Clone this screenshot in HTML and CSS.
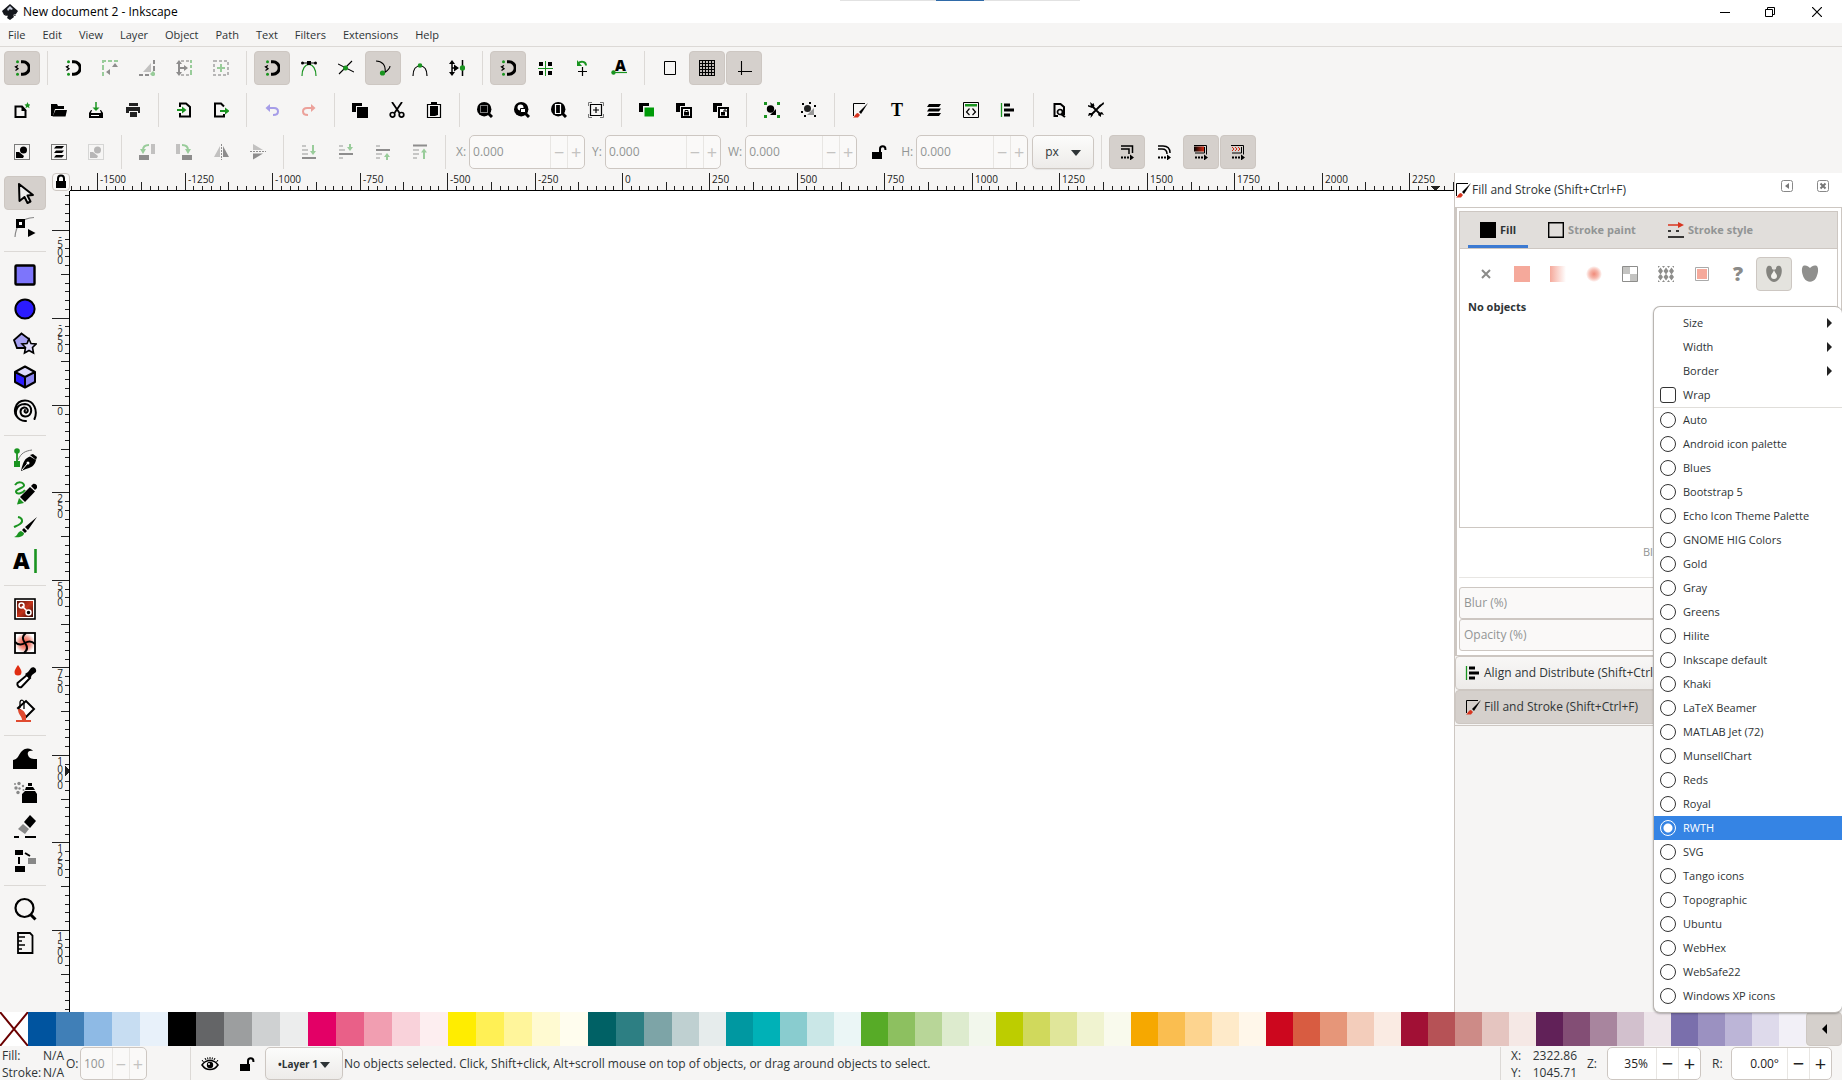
FILE: index.html
```html
<!DOCTYPE html>
<html lang="en">
<head>
<meta charset="utf-8">
<meta name="viewport" content="width=device-width, initial-scale=1">
<title>New document 2 - Inkscape</title>
<link rel="stylesheet" href="styles.css">
</head>
<body>
<svg class="sprite" aria-hidden="true">
  <defs>
    <linearGradient id="g-lin"><stop offset="0" stop-color="#f5a99b"/><stop offset="1" stop-color="#f5a99b" stop-opacity="0"/></linearGradient>
    <radialGradient id="g-rad"><stop offset="0" stop-color="#f08b7a"/><stop offset=".5" stop-color="#f6b5a9"/><stop offset="1" stop-color="#f5a99b" stop-opacity="0"/></radialGradient>
    <linearGradient id="g-red"><stop offset="0" stop-color="#000"/><stop offset="1" stop-color="#d42a12"/></linearGradient>
    <linearGradient id="g-tool" x1="0" y1="0" x2="1" y2="1"><stop offset="0" stop-color="#5a0f05"/><stop offset=".5" stop-color="#c4331b"/><stop offset="1" stop-color="#3a0904"/></linearGradient>
    <radialGradient id="g-mesh"><stop offset="0" stop-color="#e8402a"/><stop offset=".6" stop-color="#f39c8f"/><stop offset="1" stop-color="#fff"/></radialGradient>
  </defs>
  <symbol id="snap" viewBox="0 0 16 16"><path d="M7 1.800h2a6.200 6.200 0 0 1 0 12.400H7" fill="none" stroke="#000" stroke-width="3"/><path d="M4 5.500L1.500 6.800l2.500 2L1.500 10.500" fill="none" stroke="#000" stroke-width="1.300"/><circle cx="3.500" cy="1.800" r="1.500" fill="#1a9420"/><circle cx="3.500" cy="14.200" r="1.500" fill="#1a9420"/></symbol>
  <symbol id="bbox-edge" viewBox="0 0 16 16"><path d="M1 16v-4M1 10V5M1 3V1h3M6 1h4M12 1h4" fill="none" stroke="#1a9420" stroke-width="2"/><path d="M10 7l3-4 3 4zM8 9v6l-4-3z"/></symbol>
  <symbol id="bbox-corner" viewBox="0 0 16 16"><path d="M15 0v4M15 6v5M0 15h4M6 15h4" stroke="#000" stroke-width="2"/><path d="M12 3v9H4z" opacity=".5"/><path d="M14 11l3 3-3 3-3-3z" fill="#1a9420"/></symbol>
  <symbol id="bbox-mid" viewBox="0 0 16 16"><path d="M5 1h3M10 1h3M5 15h3M10 15h3" stroke="#000" stroke-width="2" opacity=".6"/><path d="M15 0v3M15 5v3M15 10v5" stroke="#1a9420" stroke-width="2"/><path d="M3 3v10M3 8h6" stroke="#000" stroke-width="2"/><path d="M0 4l3-4 3 4zM0 12l3 4 3-4zM8 5l4 3-4 3z"/></symbol>
  <symbol id="bbox-center" viewBox="0 0 16 16"><rect x="1" y="1" width="14" height="14" fill="none" stroke="#000" stroke-width="2" stroke-dasharray="3 2" opacity=".6"/><path d="M8 4v8M4 8h8" stroke="#1a9420" stroke-width="2"/></symbol>
  <symbol id="nodes" viewBox="0 0 16 16"><path d="M1 16C1 9 4 4.500 8 4.500S15 9 15 16" fill="none" stroke="#1a9420" stroke-width="1.200"/><path d="M1 3h14" stroke="#000"/><path d="M6 1h4v4H6z"/><circle cx="1.500" cy="3" r="1.500"/><circle cx="14.500" cy="3" r="1.500"/></symbol>
  <symbol id="cross-node" viewBox="0 0 16 16"><path d="M0 4l16 8M1 14L14 1" stroke="#000" stroke-width="1.100"/><circle cx="7.500" cy="8" r="2.500" fill="#1a9420"/></symbol>
  <symbol id="curve-node" viewBox="0 0 16 16"><path d="M1 1c6 0 10 4 9 11M15 6c0 3-3 5-6 7" fill="none" stroke="#000" stroke-width="1.100"/><circle cx="7.500" cy="13" r="2.600" fill="#1a9420"/></symbol>
  <symbol id="smooth-node" viewBox="0 0 16 16"><path d="M1 16C1 9 4 6 8 6s7 3 7 10" fill="none" stroke="#000" stroke-width="1.200"/><circle cx="8" cy="5.500" r="2.300" fill="#1a9420"/></symbol>
  <symbol id="mid-node" viewBox="0 0 16 16"><path d="M3 3v10M3 8h4M13.500 0v16" stroke="#000" stroke-width="1.500"/><path d="M0 4l3-4 3 4zM0 12l3 4 3-4zM5 4.500L10 8l-5 3.500z"/><circle cx="13.500" cy="8" r="2.700" fill="#1a9420"/></symbol>
  <symbol id="obj-mid" viewBox="0 0 16 16"><path d="M2 2h4v4H2zM11 2h4v4h-4zM2 11h4v4H2zM11 11h4v4h-4z"/><path d="M8.500 1v15M1 8.500h15" stroke="#1a9420"/></symbol>
  <symbol id="rot-center" viewBox="0 0 16 16"><path d="M8.500 7v9M4 11.500h9" stroke="#000" stroke-width="1.200"/><path d="M4 3.500c3-3 8-2 8 2" fill="none" stroke="#1a9420" stroke-width="2"/><path d="M3 0v6h5z" fill="#1a9420"/></symbol>
  <symbol id="page" viewBox="0 0 16 16"><path d="M2.500 1.500h11v13h-11z" fill="none" stroke="#000"/></symbol>
  <symbol id="grid" viewBox="0 0 16 16"><path d="M.5.5h15v15H.5zM3.500 0v16M6.500 0v16M9.500 0v16M12.500 0v16M0 3.500h16M0 6.500h16M0 9.500h16M0 12.500h16" fill="none" stroke="#000" stroke-width="1.200"/></symbol>
  <symbol id="guide" viewBox="0 0 16 16"><path d="M5.500 1v14M2 11.500h14" stroke="#000" stroke-width="1.100"/></symbol>
  <symbol id="new" viewBox="0 0 16 16"><path d="M1.500 4.500H8l3.500 4V15h-10z" fill="none" stroke="#000" stroke-width="2"/><path d="M7.500 4v5h5z"/><path d="M13.500 0l1 2.200 2 .3-1.500 1.500.5 2.200-2-1.200-2 1.200.5-2.200-1.500-1.500 2-.3z" fill="#1a9420"/></symbol>
  <symbol id="open" viewBox="0 0 16 16"><path d="M0 2h6l1 2h6v3H4l-2 7H0z"/><path d="M4.500 8H16l-1.500 6.500h-13z"/></symbol>
  <symbol id="save" viewBox="0 0 16 16"><path d="M8 0v7" stroke="#1a9420" stroke-width="1.500"/><path d="M4.500 5.500h7L8 9z" fill="#1a9420"/><path d="M3 8l-2 3v5h14v-5l-2-3h-1l1 3H3l1-3z"/><path d="M3 13.500h8" stroke="#fff"/></symbol>
  <symbol id="print" viewBox="0 0 16 16"><path d="M4 1h9v3H4zM1 5h14v6h-2V9H4v2H1zM5 10h7v5H5z" fill="#222"/></symbol>
  <symbol id="import" viewBox="0 0 16 16"><path d="M4 5V1.500h6L14 5v9.500H4V11" fill="none" stroke="#000" stroke-width="2"/><path d="M1 8h6" stroke="#1a9420" stroke-width="2"/><path d="M6 4.500L10.500 8 6 11.500z" fill="#1a9420"/></symbol>
  <symbol id="export" viewBox="0 0 16 16"><path d="M11 4.500L8 1.500H2v13h9V12" fill="none" stroke="#000" stroke-width="2"/><path d="M7 9h6" stroke="#1a9420" stroke-width="2"/><path d="M12 5.500L16.500 9 12 12.500z" fill="#1a9420"/></symbol>
  <symbol id="undo" viewBox="0 0 16 16"><path d="M4 6h6c3 0 4 2 4 3.500S13 13 9 13" fill="none" stroke="#3a25d8" stroke-width="2"/><path d="M6 2v8L1.500 6z" fill="#3a25d8"/></symbol>
  <symbol id="redo" viewBox="0 0 16 16"><path d="M12 6H6C3 6 2 8 2 9.500S3 13 7 13" fill="none" stroke="#e03020" stroke-width="2"/><path d="M10 2v8l4.500-4z" fill="#e03020"/></symbol>
  <symbol id="copy" viewBox="0 0 16 16"><path d="M0 1h10v3H4v6H0z"/><path d="M5 5h11v11H5z"/></symbol>
  <symbol id="cut" viewBox="0 0 16 16"><path d="M3 0l7.500 11M13 0L5.500 11" stroke="#000" stroke-width="1.800"/><circle cx="3.500" cy="12.800" r="2.300" fill="none" stroke="#000" stroke-width="1.700"/><circle cx="12.500" cy="12.800" r="2.300" fill="none" stroke="#000" stroke-width="1.700"/></symbol>
  <symbol id="paste" viewBox="0 0 16 16"><path d="M1.500 2.500h13v13h-13z" fill="none" stroke="#000" stroke-width="1.200"/><path d="M5 0h6v3H5z"/><path d="M4 4h8v9l-3 1H4z"/></symbol>
  <symbol id="zoom-sel" viewBox="0 0 16 16"><circle cx="7.200" cy="7.200" r="7.200"/><path d="M11 11l4 4" stroke="#000" stroke-width="3"/><path d="M3.500 3.500h7v7h-7z" fill="none" stroke="#fff" stroke-dasharray="1 1"/></symbol>
  <symbol id="zoom-draw" viewBox="0 0 16 16"><circle cx="7.200" cy="7.200" r="7.200"/><path d="M11 11l4 4" stroke="#000" stroke-width="3"/><circle cx="6.500" cy="5.500" r="3" fill="#fff"/><path d="M6.500 6.500h5v4h-5z" fill="#fff" stroke="#000"/></symbol>
  <symbol id="zoom-page" viewBox="0 0 16 16"><circle cx="7.200" cy="7.200" r="7.200"/><path d="M11 11l4 4" stroke="#000" stroke-width="3"/><path d="M4.500 2.500h5v9h-5z" fill="none" stroke="#fff" stroke-width="1.200"/></symbol>
  <symbol id="zoom-center" viewBox="0 0 16 16"><path d="M.5 4V.5H4M12 .5h3.500V4M15.500 12v3.500H12M4 15.500H.5V12" fill="none" stroke="#777"/><path d="M2.500 2.500h11v11h-11zM8 5v6M5 8h6" fill="none" stroke="#000" stroke-width="1.200"/></symbol>
  <symbol id="duplicate" viewBox="0 0 16 16"><path d="M0 1h10v3H4v6H0z"/><path d="M5.500 5.500H15v9H5.500z" fill="#009b09"/></symbol>
  <symbol id="clone" viewBox="0 0 16 16"><path d="M0 1h9v3H4v6H0z"/><path d="M6 6h9v9H6z" fill="#fff" stroke="#000" stroke-width="2"/><path d="M8 10h5v3.500H8z"/><path d="M9 10V8.500h3V10" fill="none" stroke="#000"/></symbol>
  <symbol id="unclone" viewBox="0 0 16 16"><path d="M0 1h9v3H4v6H0z"/><path d="M6 6h9v9H6z" fill="#fff" stroke="#000" stroke-width="2"/><path d="M8 10h4v3.500H8z"/><path d="M11 10V8h2v2" fill="none" stroke="#000"/></symbol>
  <symbol id="group" viewBox="0 0 16 16"><path d="M0 0h3v3H0zM13 0h3v3h-3zM0 13h3v3H0zM13 13h3v3h-3z" fill="#1a9420"/><circle cx="6.500" cy="7" r="3.700"/><path d="M12 7v6H6z"/></symbol>
  <symbol id="ungroup" viewBox="0 0 16 16"><circle cx="6.500" cy="6.500" r="3.500" fill="#222"/><path d="M13 6v7H6z" fill="#999"/><path d="M1 1h2v2H1zM8 0h2v2H8zM13 3h2v2h-2zM0 9h2v2H0zM3 13h2v2H3zM13 13h2v2h-2z"/></symbol>
  <symbol id="fillstroke" viewBox="0 0 16 16"><path d="M1.500 14V1.500H13" fill="none" stroke="#000"/><path d="M16 1L9 12l-2-2z"/><path d="M6 11l2 2-2 2.500H1c2-1 2-4 5-4.500z" fill="#d8351f"/></symbol>
  <symbol id="layers" viewBox="0 0 16 16"><path d="M3 2h12l-2 3H1zM3 6.500h12l-2 3H1zM3 11h12l-2 3H1z"/></symbol>
  <symbol id="xml" viewBox="0 0 16 16"><path d="M.5.5h15v15H.5z" fill="none" stroke="#000"/><path d="M2 2h12v2.500H2z" fill="#1a9420"/><path d="M6.500 6.500l-3 3.500 3 3M9.500 6.500l3 3.500-3 3" fill="none" stroke="#000" stroke-width="1.200"/></symbol>
  <symbol id="align" viewBox="0 0 16 16"><path d="M1.500 1v14" stroke="#1a9420" stroke-width="1.300"/><path d="M4 1.500h6v3H4zM4 6.500h10v3H4zM4 11.500h6v3H4z"/></symbol>
  <symbol id="doc-props" viewBox="0 0 16 16"><path d="M7 14H3.500V2h6L13 5v8" fill="none" stroke="#000" stroke-width="2"/><circle cx="9" cy="10" r="2.500" fill="#f6f5f4" stroke="#000" stroke-width="1.700"/><path d="M10 12l4 3" stroke="#000" stroke-width="2"/></symbol>
  <symbol id="prefs" viewBox="0 0 16 16"><path d="M3 3l10 10M13 3L3 13" stroke="#000" stroke-width="1.800"/><path d="M2 0l2.500 2L5.500 1l1 3L4 6 0 4.500V3l3 1zM11 11l3-1 2 3-3-1v3l-3-2zM15.500 0L16 2l-4 3-1-1zM1 11l3 0 1 2-2.500 3L3 13 0 14z"/></symbol>
  <symbol id="sel-all" viewBox="0 0 16 16"><path d="M.5.5h15v15H.5z" fill="none" stroke="#000" stroke-dasharray="1 1"/><circle cx="9.500" cy="6" r="3.500"/><path d="M2 8h3l5 4-1 2H2z"/></symbol>
  <symbol id="sel-layers" viewBox="0 0 16 16"><path d="M.5.5h15v15H.5z" fill="none" stroke="#000" stroke-dasharray="1 1"/><path d="M5 2h8l-2 2.500H3zM5 6.500h8L11 9H3zM5 11h8l-2 2.500H3z"/></symbol>
  <symbol id="rot-left" viewBox="0 0 16 16"><path d="M12 0h4v10h-4z" opacity=".5"/><path d="M0 11h10v5H0z"/><path d="M10 1C6 1 4 3 4 6" fill="none" stroke="#1a9420" stroke-width="2"/><path d="M1 5h6l-3 5z" fill="#1a9420"/></symbol>
  <symbol id="rot-right" viewBox="0 0 16 16"><path d="M0 0h4v10H0z" opacity=".5"/><path d="M6 11h10v5H6z"/><path d="M6 1c4 0 6 2 6 5" fill="none" stroke="#1a9420" stroke-width="2"/><path d="M9 5h6l-3 5z" fill="#1a9420"/></symbol>
  <symbol id="flip-h" viewBox="0 0 16 16"><path d="M7 2v11H1z" opacity=".5"/><path d="M10 2v11h6z"/><path d="M8.500 0v16" stroke="#000" stroke-dasharray="2 1"/></symbol>
  <symbol id="flip-v" viewBox="0 0 16 16"><path d="M3 6V0l10 6z" opacity=".5"/><path d="M3 9.500v6l10-6z"/><path d="M0 7.500h16" stroke="#000" stroke-dasharray="2 1"/></symbol>
  <symbol id="lower-bottom" viewBox="0 0 16 16"><path d="M1 2h4M1 6h6M1 10h6" stroke="#000" stroke-width="1.500" opacity=".6"/><path d="M1 14h14" stroke="#000" stroke-width="2"/><path d="M12 1v7" stroke="#1a9420" stroke-width="2"/><path d="M9 7h6l-3 4z" fill="#1a9420"/></symbol>
  <symbol id="lower" viewBox="0 0 16 16"><path d="M1 2h4M1 6h6M1 14h4" stroke="#000" stroke-width="1.500" opacity=".6"/><path d="M1 10h14" stroke="#000" stroke-width="2"/><path d="M12 0v4" stroke="#1a9420" stroke-width="2"/><path d="M9 3h6l-3 4z" fill="#1a9420"/></symbol>
  <symbol id="raise" viewBox="0 0 16 16"><path d="M1 2h4M1 10h6M1 14h4" stroke="#000" stroke-width="1.500" opacity=".6"/><path d="M1 6h14" stroke="#000" stroke-width="2"/><path d="M12 16v-4" stroke="#1a9420" stroke-width="2"/><path d="M9 13h6l-3-4z" fill="#1a9420"/></symbol>
  <symbol id="raise-top" viewBox="0 0 16 16"><path d="M1 6h6M1 10h6M1 14h4" stroke="#000" stroke-width="1.500" opacity=".6"/><path d="M1 1.500h14" stroke="#000" stroke-width="2"/><path d="M12 15V8" stroke="#1a9420" stroke-width="2"/><path d="M9 8.500h6l-3-4z" fill="#1a9420"/></symbol>
  <symbol id="unlock" viewBox="0 0 16 16"><path d="M1 8h10v7H1z"/><path d="M9 8V5a2.700 2.700 0 0 1 5.400 0v1" fill="none" stroke="#000" stroke-width="2"/></symbol>
  <symbol id="scale-stroke" viewBox="0 0 16 16"><path d="M2 2h11.500v7M2 5h8v5" fill="none" stroke="#000" stroke-width="1.500"/><path d="M2 13.500h9" stroke="#000" stroke-width="2" stroke-dasharray="2 1"/><path d="M11 10.500l4 3-4 3z"/></symbol>
  <symbol id="scale-corner" viewBox="0 0 16 16"><path d="M2 2h5c5 0 7 3 7 7M2 5h4c4 0 5 2 5 5" fill="none" stroke="#000" stroke-width="1.500"/><path d="M2 13.500h9" stroke="#000" stroke-width="2" stroke-dasharray="2 1"/><path d="M11 10.500l4 3-4 3z"/></symbol>
  <symbol id="move-grad" viewBox="0 0 16 16"><path d="M1 2.500h10v5H1z" fill="url(#g-red)"/><path d="M1 1.500h12.500v9M11.500 3v6H2" fill="none" stroke="#000"/><path d="M2 13.500h9" stroke="#000" stroke-width="2" stroke-dasharray="2 1"/><path d="M11 10.500l4 3-4 3z"/></symbol>
  <symbol id="move-pat" viewBox="0 0 16 16"><path d="M2 3l2 2-2 2M5 3l2 2-2 2M8 3l2 2-2 2" fill="none" stroke="#d42a12"/><path d="M1 1.500h12.500v9M11.500 3v6H2" fill="none" stroke="#000"/><path d="M2 13.500h9" stroke="#000" stroke-width="2" stroke-dasharray="2 1"/><path d="M11 10.500l4 3-4 3z"/></symbol>
  <symbol id="lock" viewBox="0 0 16 16"><path d="M3 7h10v7H3z"/><path d="M5 7V4.500a3 3 0 0 1 6 0V7" fill="none" stroke="#000" stroke-width="2"/></symbol>

  <symbol id="t-select" viewBox="0 0 24 24"><path d="M6 3l14 11-5.500.5 3 6-3 1.500-3-6L6.500 20z" fill="#eee" stroke="#000" stroke-width="2" stroke-linejoin="round"/></symbol>
  <symbol id="t-node" viewBox="0 0 24 24"><path d="M2 22C3 9 9 3 21 2.500" fill="none" stroke="#888" stroke-width="1.200"/><path d="M4.500 5.500h6v6h-6z" fill="#fff" stroke="#000" stroke-width="3"/><path d="M15 14l7.500 4-7.500 4z"/></symbol>
  <symbol id="t-rect" viewBox="0 0 24 24"><rect x="2.500" y="2.500" width="19" height="19" rx="1" fill="#7d75fb" stroke="#000" stroke-width="2.400"/></symbol>
  <symbol id="t-circle" viewBox="0 0 24 24"><circle cx="12" cy="12" r="9.600" fill="#2b1bff" stroke="#000" stroke-width="2"/></symbol>
  <symbol id="t-star" viewBox="0 0 24 24"><path d="M8.500 2.500l7.500 5.500-2.500 9H4L1 9z" fill="#a49ff0" stroke="#000" stroke-width="1.800"/><path d="M16 8l2 4.500 5 .5-3.500 3.500L20.500 22 16 19.500 11.500 22l1-5.500L9 13l5-.5z" fill="#dcd9fb" stroke="#000" stroke-width="1.600"/></symbol>
  <symbol id="t-cube" viewBox="0 0 24 24"><path d="M12 1.500L22 7l-10 5L2 7z" fill="#dcd9fb"/><path d="M2 7l10 5v10.500L2 17z" fill="#2b1bff"/><path d="M22 7l-10 5v10.500L22 17z" fill="#8d87f3"/><path d="M12 1.500L22 7v10l-10 5.500L2 17V7zM2 7l10 5 10-5M12 12v10" fill="none" stroke="#000" stroke-width="2" stroke-linejoin="round"/></symbol>
  <symbol id="t-spiral" viewBox="0 0 24 24"><path d="M12 11c-1 1.500 0 3 1.500 2.500C16 12.500 14.500 8 11 8.500 6 9.500 6.500 17 12 17.500 20 18 20.500 5.500 12 5 2.500 5 0 16 7 20.500c2 1.300 4 1.700 6 1.500M12 5M7 20.500C-2 14.500 2 1.500 12 1.500c9 0 13 10 9.500 18.500" fill="none" stroke="#000" stroke-width="2" stroke-linecap="round"/></symbol>
  <symbol id="t-pen" viewBox="0 0 24 24"><path d="M4 5v10" stroke="#1a9420" stroke-width="1.800"/><circle cx="4" cy="4" r="2.800" fill="#1a9420"/><path d="M1 14h6v6H1z" fill="#1a9420"/><path d="M5 13C8 6 12 4 19 3" fill="none" stroke="#777"/><path d="M8 24c2-9 4-13 9-14.500l6 3.500c-1 6-6 8-10 9z"/><path d="M9 23l5-6" stroke="#fff"/><circle cx="15" cy="16" r="1.500" fill="#fff"/><path d="M17 8l3-1 4 3-1 3z"/></symbol>
  <symbol id="t-pencil" viewBox="0 0 24 24"><path d="M2 4c3-4 8-3 9 0s-9 4-8 7 7 1 9-2" fill="none" stroke="#1a9420" stroke-width="2"/><path d="M7 16L17 6l5 4.500L12 21z"/><path d="M18 5l2-2c2-1 5 1 4 4l-2 2z"/><path d="M6 17l5 5-7 1.500z" fill="#1a9420"/></symbol>
  <symbol id="t-brush" viewBox="0 0 24 24"><path d="M5 2c5 1 5 5 2 7s-4 2-6 3" fill="none" stroke="#1a9420" stroke-width="2"/><path d="M24 2L15 15l-3-3zM11 13l3 3-2 2-3-3z"/><path d="M8 16l3 2c0 3-4 5-10 4 4-1 3-5 7-6z" fill="#1a9420"/></symbol>
  <symbol id="t-grad" viewBox="0 0 24 24"><rect x="2" y="2" width="20" height="20" fill="#fff" stroke="#000" stroke-width="1.600"/><rect x="4" y="4" width="16" height="16" fill="url(#g-tool)"/><path d="M9 9l6 6" stroke="#fff" stroke-width="1.500"/><circle cx="8.500" cy="8.500" r="2.500" fill="none" stroke="#fff" stroke-width="1.500"/><circle cx="15.500" cy="15.500" r="2.500" stroke="#fff" stroke-width="1.500"/></symbol>
  <symbol id="t-mesh" viewBox="0 0 24 24"><rect x="2" y="2" width="20" height="20" fill="url(#g-mesh)" stroke="#000" stroke-width="1.800"/><path d="M2 11c4 4 7 3 10 1s6-3 10 1M13 2c-4 3-4 6-1 10s3 7-1 10" fill="none" stroke="#000" stroke-width="2"/></symbol>
  <symbol id="t-dropper" viewBox="0 0 24 24"><path d="M5 0c2 3 3.500 5 3.500 7a3.500 3.500 0 0 1-7 0C1.500 5 3 3 5 0z" fill="#e02d12"/><path d="M14 10l3 3-8.500 9c-2 1-5-1-4-4z" fill="#fff" stroke="#000" stroke-width="2"/><path d="M12 9l3-2 3-4c3-2 6 1 5 4l-4 3-2 4z"/></symbol>
  <symbol id="t-bucket" viewBox="0 0 24 24"><path d="M5 9l8-7 8 8-8 8z" fill="#fff" stroke="#000" stroke-width="2"/><path d="M7 9V3c1-3 4-2 4 1v6" fill="none" stroke="#000" stroke-width="1.300"/><path d="M5 10c5 0 7 3 8 7v4h5v2H3v-2h6c0-4-4-5-4-11z" fill="#e04a30"/></symbol>
  <symbol id="t-tweak" viewBox="0 0 24 24"><path d="M0 13c5-1 5-4 8-8 4-5 10-4 12-1-4-1-6 1-5 4 1 4 5 4 9 4v10H0z"/></symbol>
  <symbol id="t-spray" viewBox="0 0 24 24"><path d="M9 13l3-3h10l2 3v9H9zM13 6h7l2 3H12zM15 2h4v3h-4z"/><g fill="#888"><circle cx="3" cy="7" r="1.700"/><circle cx="6" cy="2.500" r="1.700"/><circle cx="10" cy="5" r="1.200"/><circle cx="6.500" cy="7.500" r="1.200"/><circle cx="5" cy="11.500" r="1.700"/><circle cx="10.500" cy="9" r="1"/><circle cx="2" cy="3" r="1"/></g></symbol>
  <symbol id="t-eraser" viewBox="0 0 24 24"><path d="M17 0l6 6-6 7-6-6z"/><path d="M10 9l6 5-4 5-7-5z" fill="#888"/><path d="M1 22h5M12 22h11" stroke="#000" stroke-width="2"/></symbol>
  <symbol id="t-connect" viewBox="0 0 24 24"><path d="M2 1h8v5H2zM2 17h10v6H2z"/><path d="M15 9h8v6h-8z" fill="#888"/><path d="M6 8v7M12 4l5 3" stroke="#000" stroke-width="2"/></symbol>
  <symbol id="t-zoom" viewBox="0 0 24 24"><circle cx="11.500" cy="11" r="9" fill="none" stroke="#000" stroke-width="2.200"/><path d="M17.500 17.500l5 5" stroke="#000" stroke-width="3"/></symbol>
  <symbol id="t-measure" viewBox="0 0 24 24"><path d="M5 2h12l2.500 2.500V22H5z" fill="none" stroke="#000" stroke-width="1.800"/><path d="M5 6h7M5 10h4M5 14h7M5 18h4" stroke="#000" stroke-width="1.500"/></symbol>
</svg>

<header class="titlebar">
  <svg class="app-logo" viewBox="0 0 16 16"><path d="M8 0l8 7-2 3-3 1 1 2-4 3-3-2 1-2-4-1-2-4z" fill="#15171c"/><path d="M8 2l3 3-2 1-1-1-2 2-1-2z" fill="#c9cfdd"/><path d="M3 11l3 1M11 12l3-1" stroke="#555"/></svg>
  <h1 class="title">New document 2 - Inkscape</h1>
  <div class="progress"><span></span></div>
  <div class="window-buttons">
    <button aria-label="Minimize"><svg width="10" height="10"><path d="M0 5.500h10" stroke="#000"/></svg></button>
    <button aria-label="Restore"><svg width="10" height="10"><path d="M.5 2.500h7v7h-7zM2.500 2.500v-2h7v7h-2" fill="none" stroke="#000"/></svg></button>
    <button aria-label="Close"><svg width="10" height="10"><path d="M0 0l10 10M10 0L0 10" stroke="#000" stroke-width="1.200"/></svg></button>
  </div>
</header>

<nav class="menubar">
  <button>File</button><button>Edit</button><button>View</button><button>Layer</button><button>Object</button><button>Path</button><button>Text</button><button>Filters</button><button>Extensions</button><button>Help</button>
</nav>

<div class="toolbar" role="toolbar" aria-label="Snap controls">
  <button class="on" aria-label="Snapping"><svg><use href="#snap"/></svg></button>
  <i class="sep"></i>
  <button aria-label="Snap bounding boxes"><svg><use href="#snap"/></svg></button>
  <button disabled aria-label="Snap edges"><svg><use href="#bbox-edge"/></svg></button>
  <button disabled aria-label="Snap corners"><svg><use href="#bbox-corner"/></svg></button>
  <button disabled aria-label="Snap edge midpoints"><svg><use href="#bbox-mid"/></svg></button>
  <button disabled aria-label="Snap centers"><svg><use href="#bbox-center"/></svg></button>
  <i class="sep"></i>
  <button class="on" aria-label="Snap nodes"><svg><use href="#snap"/></svg></button>
  <button aria-label="Snap to paths"><svg><use href="#nodes"/></svg></button>
  <button aria-label="Snap to intersections"><svg><use href="#cross-node"/></svg></button>
  <button class="on" aria-label="Snap cusp nodes"><svg><use href="#curve-node"/></svg></button>
  <button aria-label="Snap smooth nodes"><svg><use href="#smooth-node"/></svg></button>
  <button aria-label="Snap midpoints"><svg><use href="#mid-node"/></svg></button>
  <i class="sep"></i>
  <button class="on" aria-label="Snap others"><svg><use href="#snap"/></svg></button>
  <button aria-label="Snap object centers"><svg><use href="#obj-mid"/></svg></button>
  <button aria-label="Snap rotation centers"><svg><use href="#rot-center"/></svg></button>
  <button aria-label="Snap text baselines"><svg viewBox="0 0 16 16"><text class="glyph-sans" x="4" y="11" font-size="15">A</text><path d="M1 12.500h15" stroke="#1a9420" stroke-width="1.200"/><circle cx="2.500" cy="12.500" r="2.200" fill="#1a9420"/></svg></button>
  <i class="sep"></i>
  <button aria-label="Snap page border"><svg><use href="#page"/></svg></button>
  <button class="on" aria-label="Snap grids"><svg><use href="#grid"/></svg></button>
  <button class="on" aria-label="Snap guides"><svg><use href="#guide"/></svg></button>
</div>

<div class="toolbar" role="toolbar" aria-label="Commands">
  <button aria-label="New"><svg><use href="#new"/></svg></button>
  <button aria-label="Open"><svg><use href="#open"/></svg></button>
  <button aria-label="Save"><svg><use href="#save"/></svg></button>
  <button aria-label="Print"><svg><use href="#print"/></svg></button>
  <i class="sep"></i>
  <button aria-label="Import"><svg><use href="#import"/></svg></button>
  <button aria-label="Export"><svg><use href="#export"/></svg></button>
  <i class="sep"></i>
  <button disabled aria-label="Undo"><svg><use href="#undo"/></svg></button>
  <button disabled aria-label="Redo"><svg><use href="#redo"/></svg></button>
  <i class="sep"></i>
  <button aria-label="Copy"><svg><use href="#copy"/></svg></button>
  <button aria-label="Cut"><svg><use href="#cut"/></svg></button>
  <button aria-label="Paste"><svg><use href="#paste"/></svg></button>
  <i class="sep"></i>
  <button aria-label="Zoom selection"><svg><use href="#zoom-sel"/></svg></button>
  <button aria-label="Zoom drawing"><svg><use href="#zoom-draw"/></svg></button>
  <button aria-label="Zoom page"><svg><use href="#zoom-page"/></svg></button>
  <button aria-label="Center page"><svg><use href="#zoom-center"/></svg></button>
  <i class="sep"></i>
  <button aria-label="Duplicate"><svg><use href="#duplicate"/></svg></button>
  <button aria-label="Clone"><svg><use href="#clone"/></svg></button>
  <button aria-label="Unlink clone"><svg><use href="#unclone"/></svg></button>
  <i class="sep"></i>
  <button aria-label="Group"><svg><use href="#group"/></svg></button>
  <button aria-label="Ungroup"><svg><use href="#ungroup"/></svg></button>
  <i class="sep"></i>
  <button aria-label="Fill and Stroke"><svg><use href="#fillstroke"/></svg></button>
  <button class="glyph-serif" aria-label="Text and Font">T</button>
  <button aria-label="Layers"><svg><use href="#layers"/></svg></button>
  <button aria-label="XML editor"><svg><use href="#xml"/></svg></button>
  <button aria-label="Align and Distribute"><svg><use href="#align"/></svg></button>
  <i class="sep"></i>
  <button aria-label="Document properties"><svg><use href="#doc-props"/></svg></button>
  <button aria-label="Preferences"><svg><use href="#prefs"/></svg></button>
</div>

<div class="toolbar" role="toolbar" aria-label="Selection controls">
  <button aria-label="Select all"><svg><use href="#sel-all"/></svg></button>
  <button aria-label="Select all in all layers"><svg><use href="#sel-layers"/></svg></button>
  <button disabled class="faint" aria-label="Deselect"><svg><use href="#sel-all"/></svg></button>
  <i class="sep"></i>
  <button disabled aria-label="Rotate left"><svg><use href="#rot-left"/></svg></button>
  <button disabled aria-label="Rotate right"><svg><use href="#rot-right"/></svg></button>
  <button disabled aria-label="Flip horizontal"><svg><use href="#flip-h"/></svg></button>
  <button disabled aria-label="Flip vertical"><svg><use href="#flip-v"/></svg></button>
  <i class="sep"></i>
  <button disabled aria-label="Lower to bottom"><svg><use href="#lower-bottom"/></svg></button>
  <button disabled aria-label="Lower"><svg><use href="#lower"/></svg></button>
  <button disabled aria-label="Raise"><svg><use href="#raise"/></svg></button>
  <button disabled aria-label="Raise to top"><svg><use href="#raise-top"/></svg></button>
  <i class="sep"></i>
  <label class="coord" for="fx">X:</label>
  <div class="spin off"><input id="fx" value="0.000" disabled><button disabled aria-label="Decrease X">−</button><button disabled aria-label="Increase X">+</button></div>
  <label class="coord" for="fy">Y:</label>
  <div class="spin off"><input id="fy" value="0.000" disabled><button disabled aria-label="Decrease Y">−</button><button disabled aria-label="Increase Y">+</button></div>
  <label class="coord" for="fw">W:</label>
  <div class="spin off narrow"><input id="fw" value="0.000" disabled><button disabled aria-label="Decrease width">−</button><button disabled aria-label="Increase width">+</button></div>
  <button class="ratio" aria-label="Lock ratio"><svg><use href="#unlock"/></svg></button>
  <label class="coord" for="fh">H:</label>
  <div class="spin off narrow"><input id="fh" value="0.000" disabled><button disabled aria-label="Decrease height">−</button><button disabled aria-label="Increase height">+</button></div>
  <div class="select unit"><select aria-label="Unit"><option>px</option></select></div>
  <i class="sep"></i>
  <button class="on" aria-label="Scale stroke width"><svg><use href="#scale-stroke"/></svg></button>
  <button aria-label="Scale corners"><svg><use href="#scale-corner"/></svg></button>
  <button class="on" aria-label="Move gradients"><svg><use href="#move-grad"/></svg></button>
  <button class="on" aria-label="Move patterns"><svg><use href="#move-pat"/></svg></button>
</div>

<main class="workspace">
  <div class="toolbox" role="toolbar" aria-label="Tools">
    <button class="on" aria-label="Select"><svg><use href="#t-select"/></svg></button>
    <button aria-label="Node"><svg><use href="#t-node"/></svg></button>
    <i class="rule"></i>
    <button aria-label="Rectangle"><svg><use href="#t-rect"/></svg></button>
    <button aria-label="Ellipse"><svg><use href="#t-circle"/></svg></button>
    <button aria-label="Star"><svg><use href="#t-star"/></svg></button>
    <button aria-label="3D box"><svg><use href="#t-cube"/></svg></button>
    <button aria-label="Spiral"><svg><use href="#t-spiral"/></svg></button>
    <i class="rule"></i>
    <button aria-label="Pen"><svg><use href="#t-pen"/></svg></button>
    <button aria-label="Pencil"><svg><use href="#t-pencil"/></svg></button>
    <button aria-label="Calligraphy"><svg><use href="#t-brush"/></svg></button>
    <button aria-label="Text"><svg viewBox="0 0 24 24"><text class="glyph-sans" x="0" y="20" font-size="23">A</text><path d="M22.500 0v24" stroke="#1a9420" stroke-width="2.600"/></svg></button>
    <i class="rule"></i>
    <button aria-label="Gradient"><svg><use href="#t-grad"/></svg></button>
    <button aria-label="Mesh"><svg><use href="#t-mesh"/></svg></button>
    <button aria-label="Dropper"><svg><use href="#t-dropper"/></svg></button>
    <button aria-label="Paint bucket"><svg><use href="#t-bucket"/></svg></button>
    <i class="rule"></i>
    <button aria-label="Tweak"><svg><use href="#t-tweak"/></svg></button>
    <button aria-label="Spray"><svg><use href="#t-spray"/></svg></button>
    <button aria-label="Eraser"><svg><use href="#t-eraser"/></svg></button>
    <button aria-label="Connector"><svg><use href="#t-connect"/></svg></button>
    <i class="rule"></i>
    <button aria-label="Zoom"><svg><use href="#t-zoom"/></svg></button>
    <button aria-label="Measure"><svg><use href="#t-measure"/></svg></button>
  </div>

  <div class="editor">
    <button class="guide-lock" aria-label="Lock guides"><svg><use href="#lock"/></svg></button>
    <svg class="ruler ruler-h" id="ruler-h"></svg>
    <svg class="ruler ruler-v" id="ruler-v"></svg>
    <div class="canvas"></div>
  </div>

  <aside class="dock">
    <div class="dock-head">
      <svg class="icon"><use href="#fillstroke"/></svg>
      <h2>Fill and Stroke (Shift+Ctrl+F)</h2>
      <button aria-label="Iconify"><svg width="12" height="12"><rect x=".5" y=".5" width="11" height="11" rx="2" fill="none" stroke="#888"/><path d="M8 3v6L4 6z" fill="#777"/></svg></button>
      <button aria-label="Close dialog"><svg width="12" height="12"><rect x=".5" y=".5" width="11" height="11" rx="2" fill="none" stroke="#888"/><path d="M3.500 3.500l5 5M8.500 3.500l-5 5" stroke="#777" stroke-width="2"/></svg></button>
    </div>
    <div class="panel">
      <section class="notebook">
        <div class="tabs" role="tablist">
          <button role="tab" class="tab current"><svg class="icon"><path d="M0 0h16v16H0z"/></svg>Fill</button>
          <button role="tab" class="tab"><svg class="icon"><path d="M.7.7h14.600v14.600H.7z" fill="none" stroke="#000" stroke-width="1.400"/></svg>Stroke paint</button>
          <button role="tab" class="tab"><svg class="icon"><path d="M0 3h11" stroke="#d8351f" stroke-width="1.500"/><path d="M10 0l6 3-6 3z" fill="#d8351f"/><path d="M0 9h3M8 9h3M0 15h16" stroke="#000" stroke-width="1.500"/></svg>Stroke style</button>
        </div>
        <div class="paints">
          <button aria-label="No paint"><svg><path d="M4 4l8 8M12 4l-8 8" stroke="#8b8b89" stroke-width="2"/></svg></button>
          <button aria-label="Flat color"><svg><path d="M0 0h16v16H0z" fill="#f5a99b"/></svg></button>
          <button aria-label="Linear gradient"><svg><path d="M0 0h16v16H0z" fill="url(#g-lin)"/></svg></button>
          <button aria-label="Radial gradient"><svg><circle cx="8" cy="8" r="8" fill="url(#g-rad)"/></svg></button>
          <button aria-label="Mesh gradient"><svg><path d="M.5.5h15v15H.5z" fill="#fff" stroke="#8d8d8b"/><path d="M1 1h7v7H1zM8 8h7v7H8z" fill="#c4c4c2"/></svg></button>
          <button aria-label="Pattern"><svg fill="#8d8d8b"><path d="M2.500 1.500L5 5 2.500 8.500 0 5zM8 1.500L10.500 5 8 8.500 5.500 5zM13.500 1.500L16 5l-2.500 3.500L11 5zM2.500 7.500L5 11l-2.500 3.500L0 11zM8 7.500l2.500 3.500L8 14.500 5.500 11zM13.500 7.500L16 11l-2.500 3.500L11 11zM0 0h2l-2 2zM4 0h3L5.500 2zM9 0h3l-1.500 2zM14 0h2v2zM0 14l2 2H0zM5.500 14L7 16H4zM10.500 14l1.500 2H9zM16 14v2h-2z"/></svg></button>
          <button aria-label="Swatch"><svg><path d="M1.500 1.500h13v13h-13z" fill="#fff" stroke="#aaa"/><path d="M3 3h10v10H3z" fill="#f5a99b"/></svg></button>
          <button class="q" aria-label="Unset paint">?</button>
          <button class="picked" aria-label="Even-odd rule"><svg><path d="M2 0c3-1 4 1 4 3 1 1 3 1 4 0 0-2 1-4 4-3 3 2 2 10-1 13-3 4-7 4-10 0C0 10-1 2 2 0z" fill="#84847f"/><path d="M8 4c1 3 3 4 3 6a3 3 0 0 1-6 0c0-2 2-3 3-6z" fill="#f3f2ee"/></svg></button>
          <button aria-label="Nonzero rule"><svg><path d="M1 0c3-1 5 0 7 2 2-2 4-3 7-2 2 3 1 8-1 12-3 5-9 5-12 0C0 8-1 3 1 0z" fill="#8f8f8d"/></svg></button>
        </div>
        <p class="hint">No objects</p>
      </section>
      <div class="blend">Blend mode: Normal</div>
      <div class="sliders">
        <label class="slider">Blur (%)<input value="0.0" disabled></label>
        <label class="slider">Opacity (%)<input value="100.0" disabled></label>
      </div>
    </div>
    <button class="dialog-tab"><svg class="icon"><use href="#align"/></svg>Align and Distribute (Shift+Ctrl+A)</button>
    <button class="dialog-tab active"><svg class="icon"><use href="#fillstroke"/></svg>Fill and Stroke (Shift+Ctrl+F)</button>
    <div class="dock-end"></div>
  </aside>

  <div class="popup" role="menu">
    <button class="item sub" role="menuitem">Size</button>
    <button class="item sub" role="menuitem">Width</button>
    <button class="item sub" role="menuitem">Border</button>
    <label class="item"><input type="checkbox">Wrap</label>
    <hr>
    <label class="item"><input type="radio" name="palette">Auto</label>
    <label class="item"><input type="radio" name="palette">Android icon palette</label>
    <label class="item"><input type="radio" name="palette">Blues</label>
    <label class="item"><input type="radio" name="palette">Bootstrap 5</label>
    <label class="item"><input type="radio" name="palette">Echo Icon Theme Palette</label>
    <label class="item"><input type="radio" name="palette">GNOME HIG Colors</label>
    <label class="item"><input type="radio" name="palette">Gold</label>
    <label class="item"><input type="radio" name="palette">Gray</label>
    <label class="item"><input type="radio" name="palette">Greens</label>
    <label class="item"><input type="radio" name="palette">Hilite</label>
    <label class="item"><input type="radio" name="palette">Inkscape default</label>
    <label class="item"><input type="radio" name="palette">Khaki</label>
    <label class="item"><input type="radio" name="palette">LaTeX Beamer</label>
    <label class="item"><input type="radio" name="palette">MATLAB Jet (72)</label>
    <label class="item"><input type="radio" name="palette">MunsellChart</label>
    <label class="item"><input type="radio" name="palette">Reds</label>
    <label class="item"><input type="radio" name="palette">Royal</label>
    <label class="item hot"><input type="radio" name="palette" checked>RWTH</label>
    <label class="item"><input type="radio" name="palette">SVG</label>
    <label class="item"><input type="radio" name="palette">Tango icons</label>
    <label class="item"><input type="radio" name="palette">Topographic</label>
    <label class="item"><input type="radio" name="palette">Ubuntu</label>
    <label class="item"><input type="radio" name="palette">WebHex</label>
    <label class="item"><input type="radio" name="palette">WebSafe22</label>
    <label class="item"><input type="radio" name="palette">Windows XP icons</label>
  </div>
</main>

<div class="palette">
  <div class="swatches" id="swatches">
    <button class="none" aria-label="No color"><svg viewBox="0 0 28 34" preserveAspectRatio="none"><path d="M0 0l28 34M28 0L0 34" stroke="#6b0000" stroke-width="2"/></svg></button>
  </div>
  <button class="palette-menu" aria-label="Palette menu"><svg width="5" height="10"><path d="M5 0v10L0 5z"/></svg></button>
</div>

<footer class="statusbar">
  <dl class="style-info"><dt>Fill:</dt><dd>N/A</dd><dt>Stroke:</dt><dd>N/A</dd></dl>
  <label class="opacity-label" for="fo">O:</label>
  <div class="spin off small"><input id="fo" value="100" disabled><button disabled aria-label="Less opacity">−</button><button disabled aria-label="More opacity">+</button></div>
  <i class="sep"></i>
  <button class="flat" aria-label="Toggle layer visibility"><svg viewBox="0 0 16 16"><path d="M0 9c4-6 12-6 16 0-4 6-12 6-16 0z" fill="none" stroke="#000" stroke-width="1.500"/><circle cx="8" cy="9" r="3.200"/><circle cx="7" cy="8" r="1" fill="#fff"/><path d="M1.500 6L0 4M4 4L3 2M8 3.500V1M12 4l1-2M14.500 6L16 4M6 3.500l-.5-2M10 3.500l.5-2" stroke="#000"/></svg></button>
  <button class="flat" aria-label="Toggle layer lock"><svg><use href="#unlock"/></svg></button>
  <div class="select layer"><select aria-label="Layer"><option>•Layer 1</option></select></div>
  <p class="message">No objects selected. Click, Shift+click, Alt+scroll mouse on top of objects, or drag around objects to select.</p>
  <dl class="pointer"><dt>X:</dt><dd>2322.86</dd><dt>Y:</dt><dd>1045.71</dd></dl>
  <label class="zoom-label" for="fz">Z:</label>
  <div class="spin zoom"><input id="fz" value="35%"><button aria-label="Zoom out">−</button><button aria-label="Zoom in">+</button></div>
  <label class="rot-label" for="fr">R:</label>
  <div class="spin rot"><input id="fr" value="0.00°"><button aria-label="Rotate down">−</button><button aria-label="Rotate up">+</button></div>
</footer>
<script src="app.js"></script>
</body>
</html>
```
FILE: styles.css
```css
:root {
  --bg: #f6f5f4;
  --line: #cdc7c2;
  --soft: #dcd9d6;
  --on: #d5d0cc;
  --text: #2e3436;
  --blue: #3584e4;
}
* { box-sizing: border-box; }
body {
  margin: 0;
  min-height: 100vh;
  display: flex;
  flex-direction: column;
  background: var(--bg);
  color: var(--text);
  font: 11px/16px "Open Sans", "Noto Sans", sans-serif;
}
button, input, select { font: inherit; color: inherit; margin: 0; }
button { padding: 0; border: 0; background: none; }
h1, h2, p, dl, dd { margin: 0; font-size: inherit; font-weight: 400; }
.sprite { position: absolute; width: 0; height: 0; }
.icon { width: 16px; height: 16px; flex: none; overflow: visible; }
.glyph-sans { font-family: "Open Sans", sans-serif; font-weight: 800; fill: #000; }

.titlebar {
  position: relative;
  display: flex;
  align-items: center;
  height: 23px;
  background: #fff;
  color: #000;
}
.app-logo { width: 16px; height: 16px; margin: 0 5px 0 2px; }
.title { flex: 1; font-size: 12px; }
.progress {
  position: absolute;
  top: 0;
  left: calc(50% - 81px);
  width: 240px;
  height: 1px;
  background: #e2e2e2;
}
.progress span { display: block; width: 48px; height: 1px; margin: 0 auto; background: #2f6aa8; }
.window-buttons { display: flex; }
.window-buttons button { width: 45px; height: 21px; display: grid; place-items: center; }
.window-buttons button:last-child { width: 50px; }

.menubar {
  display: flex;
  gap: 17px;
  height: 24px;
  padding: 0 8px;
  border-bottom: 1px solid var(--soft);
}

.toolbar { display: flex; align-items: center; gap: 1px; height: 42px; padding: 0 4px; }
.toolbar > button {
  width: 36px;
  height: 34px;
  display: grid;
  place-items: center;
  flex: none;
  border: 1px solid transparent;
  border-radius: 4px;
}
.toolbar > .glyph-serif { color: #000; font: 700 18px/18px "Liberation Serif", serif; }
.toolbar > button svg, .paints svg, .flat svg { width: 16px; height: 16px; overflow: visible; }
.toolbar > button:disabled svg { opacity: .42; }
.toolbar > button.faint svg { opacity: .25; }
.toolbar > button.on, .toolbox .on { background: var(--on); border-color: var(--line); }
.sep { width: 1px; height: 34px; margin: 0 6px; background: var(--soft); flex: none; }
.coord { margin: 0 2px 0 6px; color: #929595; font-size: 12px; }
.sep + .coord { margin-left: 3px; }
.toolbar > .ratio { width: 42px; }
.ratio + .coord { margin-left: 0; }

.spin {
  display: flex;
  width: 116px;
  height: 34px;
  flex: none;
  border: 1px solid var(--line);
  border-radius: 5px;
  background: #fff;
  color: #222;
  font-size: 12px;
  overflow: hidden;
}
.spin.narrow { width: 112px; }
.spin.off { background: #faf9f8; color: #929595; }
.spin input { flex: 1; min-width: 0; padding: 0 3px; border: 0; background: none; }
.spin button { width: 17px; border-left: 1px solid #e8e6e3; font-size: 18px; line-height: 30px; }
.spin.off button { color: #c4c3c1; }

.select {
  position: relative;
  flex: none;
  height: 34px;
  margin-left: 3px;
  border: 1px solid var(--line);
  border-radius: 5px;
  background: linear-gradient(#fcfcfb, #edebe9);
  box-shadow: 0 1px 1px #0001;
}
.select select { width: 100%; height: 100%; padding: 0 12px; border: 0; background: none; appearance: none; font-size: 12px; }
.select::after {
  content: "";
  position: absolute;
  right: 12px;
  top: 14px;
  border: 5px solid transparent;
  border-top: 6px solid #2e3436;
  border-bottom: 0;
  pointer-events: none;
}
.unit { width: 62px; }

.workspace { position: relative; flex: 1; display: flex; min-height: 839px; }
.toolbox { width: 52px; padding: 3px 6px 0 4px; }
.toolbox button {
  width: 42px;
  height: 34px;
  display: grid;
  place-items: center;
  border: 1px solid transparent;
  border-radius: 4px;
}
.toolbox svg { width: 24px; height: 24px; overflow: visible; }
.rule { display: block; height: 1px; margin: 7px 0 6px; background: var(--soft); }

.editor {
  flex: 1;
  min-width: 0;
  display: grid;
  grid-template: 18px 1fr / 18px 1fr;
}
.ruler { display: block; width: 100%; height: 100%; min-width: 0; min-height: 0; overflow: hidden; font-size: 10px; fill: #222; shape-rendering: crispEdges; }
.ruler-h { border-bottom: 1px solid #000; }
.ruler-v { border-right: 1px solid #000; }
.guide-lock { display: grid; place-items: center; border: 1px solid var(--line); border-radius: 4px; background: #faf9f8; }
.guide-lock svg { width: 16px; height: 16px; }
.canvas { background: #fff; }

.dock { width: 388px; flex: none; display: flex; flex-direction: column; border-left: 1px solid var(--line); }
.dock-head { display: flex; align-items: center; height: 34px; padding-right: 13px; background: #fff; }
.dock-head h2 { flex: 1; padding-left: 1px; font-size: 12px; }
.dock-head button { width: 12px; height: 12px; margin: 0 0 8px 24px; display: grid; }
.panel {
  border: 1px solid var(--line);
  border-left-width: 2px;
  padding: 3px 3px 4px 2px;
  background: #fff;
}
.notebook { height: 317px; border: 1px solid var(--line); }
.tabs { display: flex; gap: 8px; height: 37px; padding: 0 8px; background: #e1dedb; border-bottom: 1px solid var(--line); }
.tab {
  display: flex;
  align-items: center;
  gap: 4px;
  padding: 3px 12px 0;
  border-bottom: 3px solid transparent;
  color: #929595;
  font-weight: 700;
}
.tab.current { color: var(--text); border-color: #3c7ad2; }
.paints { display: flex; padding: 8px 8px 0; }
.paints button { width: 36px; height: 34px; display: grid; place-items: center; border: 1px solid transparent; border-radius: 4px; }
.paints .picked { background: #e4e3de; border-color: var(--line); }
.paints .q { color: #8b8b89; font-size: 20px; font-weight: 800; }
.hint { padding: 8px; font-weight: 700; }
.blend { height: 50px; padding: 16px 0 0 184px; color: #929595; border-bottom: 1px solid #e8e6e3; }
.sliders { padding-top: 9px; }
.slider {
  display: flex;
  align-items: center;
  height: 32px;
  padding: 0 4px;
  border: 1px solid var(--line);
  border-radius: 3px;
  background: #faf9f8;
  color: #929595;
  font-size: 12px;
}
.slider input { flex: 1; min-width: 0; border: 0; background: none; text-align: right; }
.dialog-tab {
  display: flex;
  align-items: center;
  gap: 3px;
  height: 34px;
  padding: 0 9px;
  border: 1px solid var(--line);
  border-radius: 4px;
  background: linear-gradient(#f8f7f6, #edebe9);
  font-size: 12px;
}
.dialog-tab.active { background: var(--on); }
.dock-end { margin-top: 1px; border-top: 1px solid var(--line); flex: 1; }

.popup {
  position: absolute;
  right: 0;
  bottom: -1px;
  width: 189px;
  padding: 4px 0;
  border: 1px solid #b9b5b1;
  border-right: 0;
  border-radius: 7px;
  background: #fff;
  box-shadow: 0 1px 2px #0004;
}
.item { display: flex; align-items: center; gap: 7px; width: 100%; height: 24px; padding: 0 6px; }
.item.sub { justify-content: space-between; padding: 0 10px 0 29px; }
.item.sub::after { content: ""; border: 5px solid transparent; border-left: 5px solid #222; border-right: 0; }
.item.hot { background: var(--blue); color: #fff; }
.popup hr { height: 1px; margin: 0; border: 0; background: #e0deda; }
.popup input { appearance: none; width: 16px; height: 16px; flex: none; border: 1px solid #333; border-radius: 3px; background: #fff; }
.popup input[type="radio"] { border-radius: 50%; }
.popup input:checked { border-color: #fff; background: radial-gradient(circle, #fff 4px, var(--blue) 5px); }

.palette { display: flex; height: 34px; }
.swatches { flex: 1; display: flex; }
.swatches button { flex: 27 0 0; min-width: 0; }
.swatches button:nth-child(-n+24) { flex-grow: 28; }
.none { background: #fff; }
.none svg { display: block; width: 100%; height: 100%; }
.palette-menu { width: 36px; display: grid; place-items: center; background: var(--on); border: 1px solid var(--line); border-radius: 4px; }

.statusbar { display: flex; align-items: center; height: 34px; padding-top: 1px; font-size: 12px; }
.style-info, .pointer { display: grid; grid-template-columns: 40px 22px; line-height: 17px; padding-left: 2px; }
.style-info dd { text-align: right; }
.opacity-label { width: 16px; padding-left: 2px; }
.spin.small { width: 67px; }
.statusbar .spin, .statusbar .select { height: 33px; }
.statusbar .sep { margin: 0 0 0 43px; height: 33px; }
.flat { width: 37px; height: 32px; display: grid; place-items: center; }
.layer { width: 78px; margin: 0 1px 0 0; }
.layer select { font-size: 10px; font-weight: 700; }
.message { flex: 1; white-space: nowrap; }
.pointer { grid-template-columns: 20px 46px; padding-left: 10px; border-left: 1px solid var(--soft); }
.pointer dd { text-align: right; }
.zoom-label { width: 30px; padding-left: 10px; }
.rot-label { width: 30px; padding-left: 11px; }
.spin.zoom { width: 94px; }
.spin.rot { width: 101px; margin-right: 10px; }
.zoom input, .rot input { text-align: right; padding-right: 8px; }
.zoom button, .rot button { width: 22px; font-size: 20px; }
```
FILE: app.js
```js
const SVG = "http://www.w3.org/2000/svg";
const STEP = 8.747; // pixels between minor ticks (25 units)

function node(parent, name, attrs, text) {
  const el = document.createElementNS(SVG, name);
  for (const key in attrs) el.setAttribute(key, attrs[key]);
  if (text) el.textContent = text;
  parent.appendChild(el);
}

function drawRuler(id, origin, vertical, marker) {
  const svg = document.getElementById(id);
  svg.textContent = "";
  const length = vertical ? svg.clientHeight : svg.clientWidth;
  for (let i = Math.ceil((-origin - 30) / STEP); origin + i * STEP < length; i++) {
    const at = Math.round(origin + i * STEP);
    const size = i % 10 === 0 ? 18 : i % 5 === 0 ? 9 : 5;
    node(svg, "rect", vertical
      ? { x: 18 - size, y: at, width: size, height: 1 }
      : { x: at, y: 18 - size, width: 1, height: size });
    if (i % 10 !== 0 || at < 0) continue;
    const label = String(i * 25);
    if (!vertical) {
      node(svg, "text", { x: at + 3, y: 10 }, label);
    } else {
      [...label].forEach((c, n) =>
        node(svg, "text", { x: 8, y: at + 10 + n * 8, "text-anchor": "middle" }, c));
    }
  }
  const m = marker;
  node(svg, "path", { d: vertical ? `M13 ${m - 5}v10l5-5z` : `M${m - 5} 13h10l-5 5z` });
}

function drawRulers() {
  drawRuler("ruler-h", 552, false, 1365);
  drawRuler("ruler-v", 214, true, 580);
}

const COLORS = `
00549f 407fb7 8ebae5 c7ddf2 e8f1fa 000000 646567 9c9e9f cfd1d2 eceded
e30066 e96088 f19eb1 f9d2da fdeef0 ffed00 fff055 fff59b fffad1 fffdee
006165 2d7f83 7da4a7 bfd0d1 e6ecec 0098a1 00b1b7 89cccf cae7e7 ebf6f6
57ab27 8dc060 b8d698 ddebce f2f7ec bdcd00 d0d95c e0e69a f0f3d0 f9faed
f6a800 fabe50 fdd48f feeac9 fff7ea cc071e d85c41 e69679 f3cdbb faebe3
a11035 b65256 cd8b87 e5c5c0 f5e8e5 612158 834e75 a8859e d2c0cd ede5ea
7a6fac 9b91c1 bcb5d7 dedaeb f2f0f7`.trim().split(/\s+/);

const swatches = document.getElementById("swatches");
for (const color of COLORS) {
  const button = document.createElement("button");
  button.style.background = "#" + color;
  button.setAttribute("aria-label", "#" + color);
  swatches.appendChild(button);
}

drawRulers();
addEventListener("resize", drawRulers);
```
